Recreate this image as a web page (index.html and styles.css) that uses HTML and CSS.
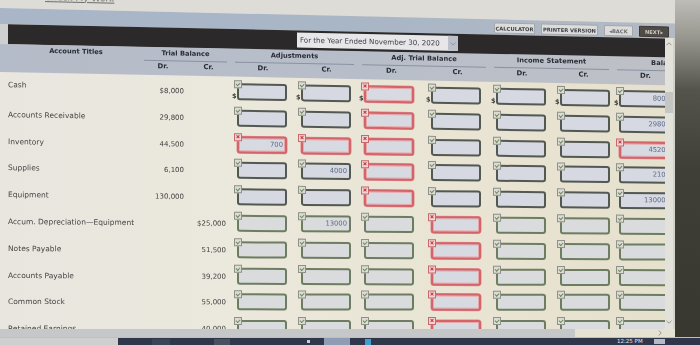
FILE: index.html
```html
<!DOCTYPE html>
<html>
<head>
<meta charset="utf-8">
<title>Worksheet</title>
<link rel="stylesheet" href="styles.css">
</head>
<body>
<div class="screen">
  <div class="upper">
    <div class="app">
      <div class="topstrip"><span class="toplink">Check My Work</span></div>
      <div class="band">
        <span class="btn w-calc">CALCULATOR</span>
        <span class="btn w-print">PRINTER VERSION</span>
        <span class="btn w-back">&#9666;BACK</span>
        <span class="btn w-next dark">NEXT&#9656;</span>
      </div>
      <div class="main">
        <div class="viewport">
          <div class="darkwrap">
            <div class="darkbar">
              <div class="datebox"><span class="datetext">For the Year Ended November 30, 2020</span><span class="dd"><svg viewBox="0 0 6 4" width="6" height="4"><polyline points="0.5,0.8 3,3.2 5.5,0.8" fill="none" stroke="#8d929c" stroke-width="0.9"/></svg></span></div>
            </div>
          </div>

          <div class="thead cols">
            <div class="gl acct">Account Titles</div>
            <div class="gl grp">Trial Balance</div>
            <div class="gl grp">Adjustments</div>
            <div class="gl grp">Adj. Trial Balance</div>
            <div class="gl grp">Income Statement</div>
            <div class="gl grp">Balance Sheet</div>
            <div class="sub"></div>
            <div class="sub">Dr.</div><div class="sub">Cr.</div>
            <div class="sub">Dr.</div><div class="sub">Cr.</div>
            <div class="sub">Dr.</div><div class="sub">Cr.</div>
            <div class="sub">Dr.</div><div class="sub">Cr.</div>
            <div class="sub">Dr.</div><div class="sub">Cr.</div>
          </div>

          <div class="row r1 cols">
            <div class="t">Cash</div><div class="n dr">$8,000</div><div class="n cr"></div>
            <div class="c"><div class="bx"><i class="ok"></i><b class="dol">$</b></div></div>
            <div class="c"><div class="bx"><i class="ok"></i><b class="dol">$</b></div></div>
            <div class="c"><div class="bx er"><i class="no"></i><b class="dol">$</b></div></div>
            <div class="c"><div class="bx"><i class="ok"></i><b class="dol">$</b></div></div>
            <div class="c"><div class="bx"><i class="ok"></i><b class="dol">$</b></div></div>
            <div class="c"><div class="bx"><i class="ok"></i><b class="dol">$</b></div></div>
            <div class="c"><div class="bx wide"><i class="ok"></i><b class="dol">$</b>8000</div></div>
          </div>

          <div class="row r2 cols">
            <div class="t">Accounts Receivable</div><div class="n dr">29,800</div><div class="n cr"></div>
            <div class="c"><div class="bx"><i class="ok"></i></div></div>
            <div class="c"><div class="bx"><i class="ok"></i></div></div>
            <div class="c"><div class="bx er"><i class="no"></i></div></div>
            <div class="c"><div class="bx"><i class="ok"></i></div></div>
            <div class="c"><div class="bx"><i class="ok"></i></div></div>
            <div class="c"><div class="bx"><i class="ok"></i></div></div>
            <div class="c"><div class="bx wide"><i class="ok"></i>29800</div></div>
          </div>

          <div class="row r3 cols">
            <div class="t">Inventory</div><div class="n dr">44,500</div><div class="n cr"></div>
            <div class="c"><div class="bx er"><i class="no"></i>700</div></div>
            <div class="c"><div class="bx er"><i class="no"></i></div></div>
            <div class="c"><div class="bx er"><i class="no"></i></div></div>
            <div class="c"><div class="bx"><i class="ok"></i></div></div>
            <div class="c"><div class="bx"><i class="ok"></i></div></div>
            <div class="c"><div class="bx"><i class="ok"></i></div></div>
            <div class="c"><div class="bx wide er"><i class="no"></i>45200</div></div>
          </div>

          <div class="row r4 cols">
            <div class="t">Supplies</div><div class="n dr">6,100</div><div class="n cr"></div>
            <div class="c"><div class="bx"><i class="ok"></i></div></div>
            <div class="c"><div class="bx"><i class="ok"></i>4000</div></div>
            <div class="c"><div class="bx er"><i class="no"></i></div></div>
            <div class="c"><div class="bx"><i class="ok"></i></div></div>
            <div class="c"><div class="bx"><i class="ok"></i></div></div>
            <div class="c"><div class="bx"><i class="ok"></i></div></div>
            <div class="c"><div class="bx wide"><i class="ok"></i>2100</div></div>
          </div>

          <div class="row r5 cols">
            <div class="t">Equipment</div><div class="n dr">130,000</div><div class="n cr"></div>
            <div class="c"><div class="bx"><i class="ok"></i></div></div>
            <div class="c"><div class="bx"><i class="ok"></i></div></div>
            <div class="c"><div class="bx er"><i class="no"></i></div></div>
            <div class="c"><div class="bx"><i class="ok"></i></div></div>
            <div class="c"><div class="bx"><i class="ok"></i></div></div>
            <div class="c"><div class="bx"><i class="ok"></i></div></div>
            <div class="c"><div class="bx wide"><i class="ok"></i>130000</div></div>
          </div>

          <div class="row r6 lo cols">
            <div class="t">Accum. Depreciation&mdash;Equipment</div><div class="n dr"></div><div class="n cr">$25,000</div>
            <div class="c"><div class="bx"><i class="ok"></i></div></div>
            <div class="c"><div class="bx"><i class="ok"></i>13000</div></div>
            <div class="c"><div class="bx"><i class="ok"></i></div></div>
            <div class="c"><div class="bx er"><i class="no"></i></div></div>
            <div class="c"><div class="bx"><i class="ok"></i></div></div>
            <div class="c"><div class="bx"><i class="ok"></i></div></div>
            <div class="c"><div class="bx wide"><i class="ok"></i></div></div>
          </div>

          <div class="row r7 lo cols">
            <div class="t">Notes Payable</div><div class="n dr"></div><div class="n cr">51,500</div>
            <div class="c"><div class="bx"><i class="ok"></i></div></div>
            <div class="c"><div class="bx"><i class="ok"></i></div></div>
            <div class="c"><div class="bx"><i class="ok"></i></div></div>
            <div class="c"><div class="bx er"><i class="no"></i></div></div>
            <div class="c"><div class="bx"><i class="ok"></i></div></div>
            <div class="c"><div class="bx"><i class="ok"></i></div></div>
            <div class="c"><div class="bx wide"><i class="ok"></i></div></div>
          </div>

          <div class="row r8 lo cols">
            <div class="t">Accounts Payable</div><div class="n dr"></div><div class="n cr">39,200</div>
            <div class="c"><div class="bx"><i class="ok"></i></div></div>
            <div class="c"><div class="bx"><i class="ok"></i></div></div>
            <div class="c"><div class="bx"><i class="ok"></i></div></div>
            <div class="c"><div class="bx er"><i class="no"></i></div></div>
            <div class="c"><div class="bx"><i class="ok"></i></div></div>
            <div class="c"><div class="bx"><i class="ok"></i></div></div>
            <div class="c"><div class="bx wide"><i class="ok"></i></div></div>
          </div>

          <div class="row r9 lo cols">
            <div class="t">Common Stock</div><div class="n dr"></div><div class="n cr">55,000</div>
            <div class="c"><div class="bx"><i class="ok"></i></div></div>
            <div class="c"><div class="bx"><i class="ok"></i></div></div>
            <div class="c"><div class="bx"><i class="ok"></i></div></div>
            <div class="c"><div class="bx er"><i class="no"></i></div></div>
            <div class="c"><div class="bx"><i class="ok"></i></div></div>
            <div class="c"><div class="bx"><i class="ok"></i></div></div>
            <div class="c"><div class="bx wide"><i class="ok"></i></div></div>
          </div>

          <div class="row r10 lo cols">
            <div class="t">Retained Earnings</div><div class="n dr"></div><div class="n cr">40,000</div>
            <div class="c"><div class="bx"><i class="ok"></i></div></div>
            <div class="c"><div class="bx"><i class="ok"></i></div></div>
            <div class="c"><div class="bx"><i class="ok"></i></div></div>
            <div class="c"><div class="bx er"><i class="no"></i></div></div>
            <div class="c"><div class="bx"><i class="ok"></i></div></div>
            <div class="c"><div class="bx"><i class="ok"></i></div></div>
            <div class="c"><div class="bx wide"><i class="ok"></i></div></div>
          </div>
        </div>

        <div class="vscroll">
          <svg class="vup" viewBox="0 0 6 4" width="6" height="4"><polyline points="0.5,3.3 3,0.8 5.5,3.3" fill="none" stroke="#8c8c8a" stroke-width="0.9"/></svg>
          <div class="vthumb"></div>
          <svg class="vdown" viewBox="0 0 6 4" width="6" height="4"><polyline points="0.5,0.8 3,3.2 5.5,0.8" fill="none" stroke="#8c8c8a" stroke-width="0.9"/></svg>
        </div>
      </div>

      <div class="hscroll">
        <div class="hthumb"></div>
        <div class="htrack"><svg class="hright" viewBox="0 0 4 6" width="4" height="6"><polyline points="0.8,0.5 3.2,3 0.8,5.5" fill="none" stroke="#8c8c8a" stroke-width="0.9"/></svg></div>
      </div>
    </div>
    <div class="bezel"></div>
  </div>

  <div class="taskbar">
    <div class="tb-left"></div>
    <div class="tb-dark">
      <span class="tb-a"></span>
      <span class="tb-b"></span>
      <span class="tb-dot"></span>
      <span class="tb-panel"></span>
      <span class="tb-sq"></span>
      <span class="clock">12:25 PM</span>
      <span class="tb-note"></span>
    </div>
  </div>
</div>
</body>
</html>
```

FILE: styles.css
```css
* {
  box-sizing: border-box;
  margin: 0;
  padding: 0;
}

html, body {
  width: 700px;
  height: 345px;
  overflow: hidden;
}

body {
  font-family: "DejaVu Sans", Verdana, sans-serif;
  background: #3b3a34;
}

.screen {
  width: 700px;
  height: 345px;
  display: flex;
  flex-direction: column;
  overflow: hidden;
  background: linear-gradient(180deg, #bdbcb6 0px, #9a9992 35px, #55544c 90px, #3f3e37 170px, #37362f 100%);
}

.upper {
  display: flex;
  height: 337px;
  flex: none;
}

.app {
  width: 675px;
  height: 337px;
  flex: none;
  display: flex;
  flex-direction: column;
  overflow: hidden;
  background: linear-gradient(90deg, #e8e6df 0%, #ebe8dc 35%, #e9e4d3 70%, #e6e1cd 100%);
  filter: blur(0.3px);
}

.bezel {
  flex: 1;
}

/* ---------- top strip & button band ---------- */
.topstrip {
  flex: none;
  height: 28px;
  margin-top: -20px;
  background: #dedcd6;
  position: relative;
  transform: skewY(1.36deg);
  transform-origin: 0 0;
}

.toplink {
  position: absolute;
  left: 45px;
  bottom: 7.5px;
  font-size: 9px;
  line-height: 9px;
  color: #6d6d6d;
  text-decoration: underline;
  filter: blur(0.4px);
}

.band {
  flex: none;
  height: 16px;
  background: linear-gradient(90deg, #a8b6c8 0%, #aab6c6 60%, #b3bac4 100%);
  display: flex;
  justify-content: flex-end;
  align-items: flex-start;
  gap: 6px;
  padding: 3px 6px 0 0;
  transform: skewY(1.32deg);
  transform-origin: 0 0;
}

.btn {
  height: 11px;
  display: flex;
  align-items: center;
  justify-content: center;
  font-size: 5.2px;
  font-weight: bold;
  color: #3c3f46;
  background: #dcdcdb;
  border: 1px solid #a5a7ab;
  border-radius: 1px;
  white-space: nowrap;
}

.w-calc { width: 41px; }
.w-print { width: 57px; }
.w-back { width: 29px; color: #6a6c72; }
.w-next { width: 30px; }

.btn.dark {
  background: #4f4b46;
  border-color: #3d3a36;
  color: #cfcac4;
}

/* ---------- main area ---------- */
.main {
  flex: none;
  height: 305px;
  display: flex;
}

.viewport {
  width: 665px;
  height: 305px;
  overflow: hidden;
  flex: none;
}

.darkwrap {
  height: 20px;
  padding-left: 8px;
  background: #cdcfd1;
  transform: skewY(1.243deg);
  transform-origin: 0 0;
}

.darkbar {
  height: 20px;
  background: #2b2929;
  padding: 2px 0 0 289px;
}

.datebox {
  width: 161px;
  height: 15px;
  display: flex;
  background: #e7e7ea;
}

.datetext {
  flex: 1;
  padding-left: 3px;
  font-size: 7.1px;
  line-height: 15px;
  color: #3f4046;
  white-space: nowrap;
}

.dd {
  width: 10px;
  background: #bcc0c8;
  display: flex;
  align-items: center;
  justify-content: center;
}

.cols {
  display: grid;
  grid-template-columns: 140px 46px 45px 64px 63px 67px 65px 64px 59px 65px 65px;
}

.thead {
  height: 28px;
  grid-template-rows: 14px 14px;
  background: linear-gradient(90deg, #b5bcc9 0%, #b8bec9 55%, #bec0c6 100%);
  color: #2a2d35;
  font-weight: bold;
  transform: skewY(1.14deg);
  transform-origin: 0 0;
}

.gl {
  font-size: 6.7px;
  line-height: 13px;
  text-align: center;
  white-space: nowrap;
}

.acct {
  padding-left: 12px;
}

.grp {
  grid-column: span 2;
  margin: 0 4px;
  border-bottom: 1px solid #8a92a1;
}

.sub {
  font-size: 6.9px;
  line-height: 11px;
  text-align: center;
}

/* ---------- body rows ---------- */
.row {
  height: 26.8px;
  align-items: start;
  transform-origin: 0 0;
}

.r1 { transform: skewY(1.014deg); }
.r2 { transform: skewY(0.897deg); }
.r3 { transform: skewY(0.78deg); }
.r4 { transform: skewY(0.663deg); }
.r5 { transform: skewY(0.546deg); }
.r6 { transform: skewY(0.429deg); }
.r7 { transform: skewY(0.312deg); }
.r8 { transform: skewY(0.195deg); }
.r9 { transform: skewY(0.078deg); }
.r10 { transform: none; }

.t {
  padding: 10.5px 0 0 8px;
  font-size: 7.5px;
  line-height: 10px;
  color: #454545;
  white-space: nowrap;
}

.r1 .t {
  padding-top: 7.5px;
}

.n {
  padding-top: 10.5px;
  font-size: 7px;
  line-height: 10px;
  color: #424242;
  text-align: right;
  white-space: nowrap;
}

.n.dr { padding-right: 2px; }
.n.cr { padding-right: 5px; }

.c {
  padding: 6.7px 0 0 6px;
}

.bx {
  position: relative;
  width: 50px;
  height: 17px;
  border: 2px solid #525852;
  border-radius: 3px;
  background: #d6d9e1;
  padding-right: 2px;
  font-size: 6.8px;
  line-height: 13px;
  text-align: right;
  color: #5e6c86;
  white-space: nowrap;
}

.lo .bx {
  border-color: #6d7d61;
  background: #d9dbdc;
}

.bx.wide {
  width: 55px;
}

.bx.er,
.lo .bx.er {
  border: 2px solid #d3656a;
  box-shadow: inset 0 0 0 1px #eaa7aa, 0 0 0 0.5px #de8a8d;
  background: #d8dae2;
}

.ok,
.no {
  position: absolute;
  left: -5px;
  top: -5px;
  width: 8px;
  height: 8px;
  border: 1px solid #8f908a;
  background: #dcdcd4;
}

.ok::after {
  content: "";
  position: absolute;
  left: 1.3px;
  top: 1px;
  width: 3.4px;
  height: 2px;
  border-left: 1px solid #6d8a5b;
  border-bottom: 1px solid #6d8a5b;
  transform: rotate(-45deg);
}

.no {
  border-color: #c8686c;
  background: #f0d5d5;
}

.no::before,
.no::after {
  content: "";
  position: absolute;
  left: 1px;
  top: 2.5px;
  width: 4px;
  height: 1px;
  background: #c43a3f;
  transform: rotate(45deg);
}

.no::after {
  transform: rotate(-45deg);
}

.dol {
  position: absolute;
  left: -7px;
  bottom: -2px;
  font-size: 6.5px;
  line-height: 7px;
  font-weight: bold;
  color: #3a3a3a;
}

/* ---------- scrollbars ---------- */
.vscroll {
  width: 10px;
  flex: none;
  margin-top: 14px;
  background: linear-gradient(90deg, #e2e1da 0, #e2e1da 8px, #d3d2cb 8px);
  position: relative;
}

.vup {
  position: absolute;
  left: 1px;
  top: 4px;
}

.vthumb {
  position: absolute;
  left: 0;
  top: 54px;
  width: 8px;
  height: 21px;
  background: #c5c5c3;
}

.vdown {
  position: absolute;
  left: 1px;
  top: 282px;
}

.hscroll {
  flex: none;
  height: 8px;
  display: flex;
}

.hthumb {
  width: 575px;
  background: #c6c7c9;
}

.htrack {
  flex: 1;
  position: relative;
  background: #e5e2d4;
}

.hright {
  position: absolute;
  left: 83px;
  top: 1px;
}

/* ---------- taskbar ---------- */
.taskbar {
  flex: none;
  height: 8px;
  display: flex;
  border-top: 1px solid #bfbfbf;
}

.tb-left {
  width: 118px;
  background: #cfcfcf;
}

.tb-dark {
  flex: 1;
  position: relative;
  background: #30374a;
}

.tb-a {
  position: absolute;
  left: 34px;
  top: 1px;
  width: 18px;
  height: 6px;
  background: #3c4457;
}

.tb-b {
  position: absolute;
  left: 96px;
  top: 1px;
  width: 16px;
  height: 6px;
  background: #4a5060;
}

.tb-dot {
  position: absolute;
  left: 189px;
  top: 2px;
  width: 3px;
  height: 3px;
  background: #c9ccd3;
}

.tb-panel {
  position: absolute;
  left: 206px;
  top: 0;
  width: 26px;
  height: 7px;
  background: #8e9db3;
}

.tb-sq {
  position: absolute;
  left: 247px;
  top: 1px;
  width: 6px;
  height: 6px;
  background: #3d9fd0;
}

.clock {
  position: absolute;
  left: 499px;
  top: 0;
  font-size: 5.5px;
  line-height: 7px;
  color: #e4e6ea;
  white-space: nowrap;
}

.tb-note {
  position: absolute;
  left: 536px;
  top: 1px;
  width: 11px;
  height: 5px;
  background: #b6bac2;
}
```
